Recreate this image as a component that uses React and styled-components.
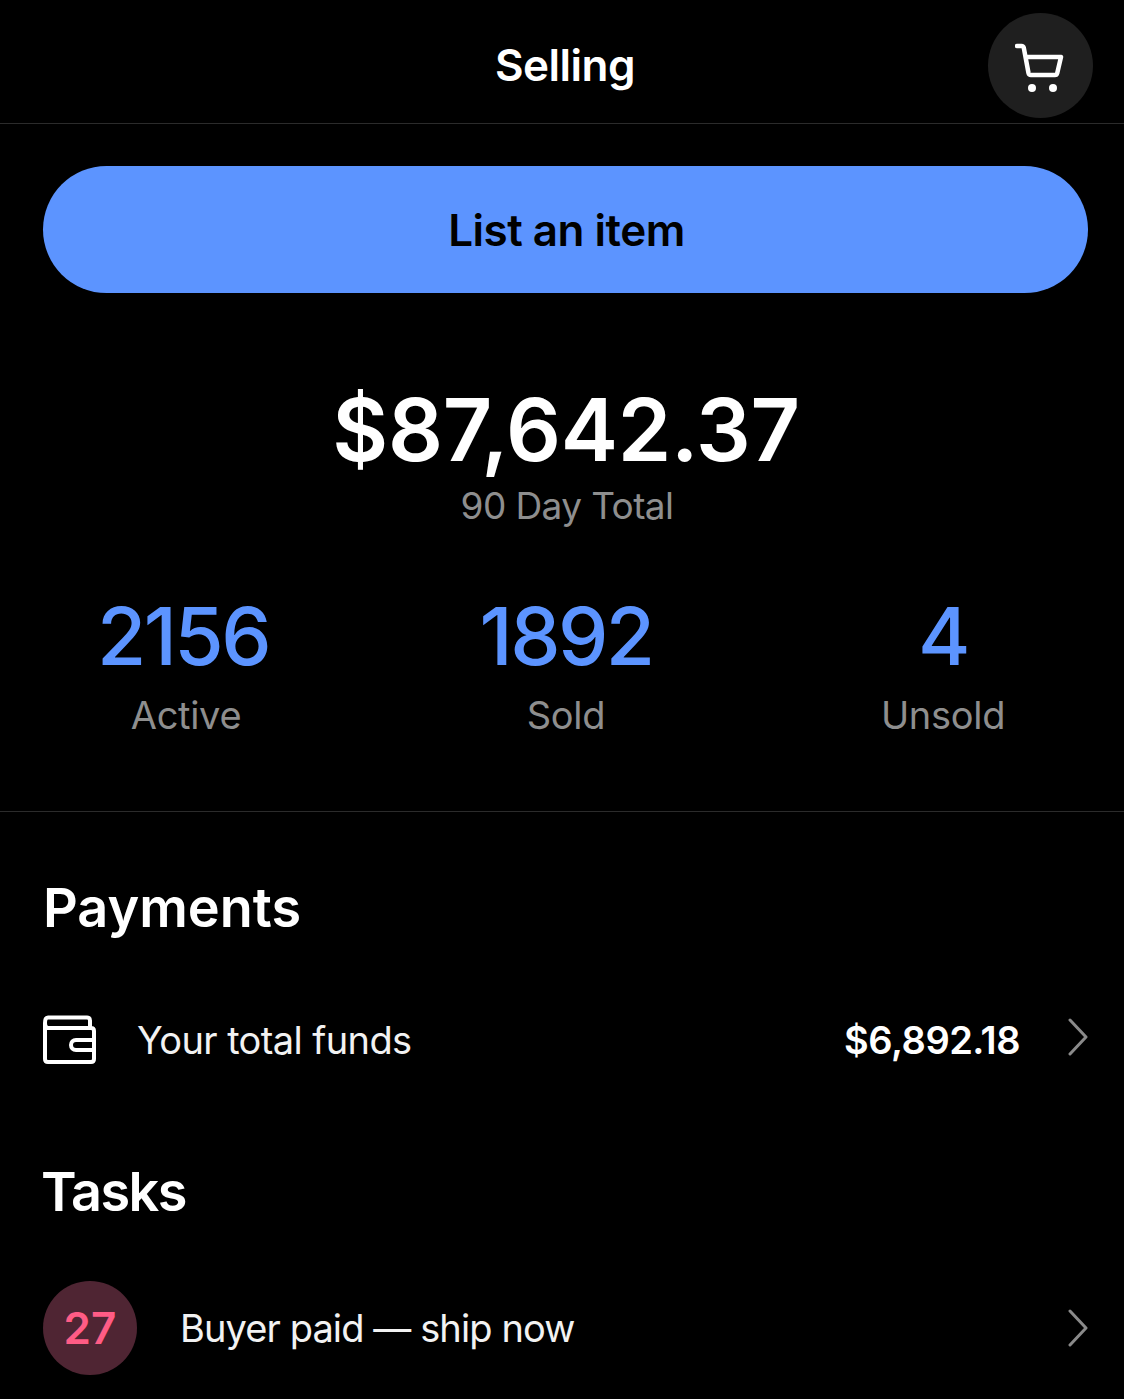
import React from 'react'
import styled, { createGlobalStyle } from 'styled-components'

const Global = createGlobalStyle`
  html, body {
    margin: 0;
    background: #000;
  }
  * { box-sizing: border-box; }
`

const Page = styled.div`
  width: 1124px;
  height: 1399px;
  overflow: hidden;
  background: #000;
  color: #fff;
  font-family: Inter, "Liberation Sans", sans-serif;
`

const Header = styled.header`
  position: relative;
  height: 124px;
  display: flex;
  align-items: center;
  justify-content: center;
  border-bottom: 1px solid #2b2b2b;
`

const HeaderTitle = styled.h1`
  margin: 6px 0 0 6px;
  font-size: 44px;
  font-weight: 600;
  letter-spacing: -0.5px;
`

const CartButton = styled.div`
  position: absolute;
  right: 31px;
  top: 13px;
  width: 105px;
  height: 105px;
  border-radius: 50%;
  background: #1f1f1f;
  display: flex;
  align-items: center;
  justify-content: center;
  padding-top: 3px;
`

const ListButton = styled.div`
  margin: 42px 36px 0 43px;
  height: 127px;
  border-radius: 64px;
  background: #5c94ff;
  color: #000;
  display: flex;
  align-items: center;
  justify-content: center;
  font-size: 44px;
  font-weight: 600;
  letter-spacing: -0.5px;
  padding-left: 2px;
`

const Total = styled.div`
  margin-top: 85px;
  text-align: center;
`

const Amount = styled.div`
  font-size: 86px;
  line-height: 104px;
  font-weight: 600;
  letter-spacing: -0.3px;
  margin-left: 8px;
`

const AmountLabel = styled.div`
  font-size: 37px;
  line-height: 44px;
  color: #8e8e8e;
  margin: 2px 0 0 10px;
  letter-spacing: -0.6px;
`

const Stats = styled.div`
  margin-top: 63px;
  display: grid;
  grid-template-columns: 370px 392px 362px;
  padding-bottom: 71px;
  border-bottom: 1px solid #2b2b2b;
`

const Stat = styled.div`
  text-align: center;
`

const StatValue = styled.div`
  font-size: 80px;
  line-height: 90px;
  font-weight: 500;
  color: #5c94ff;
  letter-spacing: -2.6px;
  margin-right: ${({ $shift = 0 }) => $shift}px;
`

const StatLabel = styled.div`
  margin: 9px 0 0 ${({ $shift = 0 }) => $shift}px;
  font-size: 38px;
  line-height: 50px;
  color: #8e8e8e;
  letter-spacing: -0.3px;
`

const Section = styled.section`
  padding: 0 36px 0 43px;
`

const SectionTitle = styled.h2`
  margin: ${({ $top }) => $top}px 0 0 ${({ $left = 0 }) => $left}px;
  font-size: 54px;
  line-height: 62px;
  font-weight: 600;
  letter-spacing: ${({ $spacing }) => $spacing}px;
`

const Row = styled.div`
  display: flex;
  align-items: center;
  margin-top: ${({ $top }) => $top}px;
`

const RowLabel = styled.div`
  flex: 1;
  margin-left: ${({ $left }) => $left}px;
  font-size: 38px;
  letter-spacing: -0.6px;
  color: #f2f2f2;
`

const TaskLabel = styled(RowLabel)`
  letter-spacing: -0.9px;
`

const RowValue = styled.div`
  font-size: 38px;
  font-weight: 600;
  letter-spacing: -0.5px;
  margin-right: 48px;
`

const Badge = styled.div`
  width: 94px;
  height: 94px;
  border-radius: 50%;
  background: #4f2533;
  color: #ff5c85;
  display: flex;
  align-items: center;
  justify-content: center;
  font-size: 44px;
  font-weight: 600;
`

const ChevronSvg = styled.svg`
  margin-bottom: ${({ $lift }) => $lift}px;
`

const WalletSvg = styled.svg`
  margin-left: -1px;
`

const CartIcon = () => (
  <svg width="52" height="52" viewBox="0 0 52 52" fill="none" stroke="#fff" strokeWidth="4.5" strokeLinecap="round" strokeLinejoin="round">
    <path d="M2 5h4.500c1.200 0 2 .7 2.300 1.900L13.500 32c.3 1.300 1.100 2 2.400 2h24c1.200 0 2-.6 2.300-1.800L46 16H11" />
    <circle cx="17" cy="47" r="4" fill="#fff" stroke="none" />
    <circle cx="38" cy="47" r="4" fill="#fff" stroke="none" />
  </svg>
)

const WalletIcon = () => (
  <WalletSvg width="54" height="50" viewBox="0 0 54 50" fill="none" stroke="#fff" strokeWidth="4" strokeLinecap="round" strokeLinejoin="round">
    <path d="M3 8V44c0 1.800 1.200 3 3 3h43c1.800 0 3-1.200 3-3V16c0-1.800-1.200-3-3-3H6C4 13 3 11 3 8s1-5.500 3-5.500h39c1.800 0 3 1.200 3 3V13" />
    <path d="M52 25H34c-3 0-5 2-5 5s2 5 5 5h18" />
  </WalletSvg>
)

const Chevron = ({ lift }) => (
  <ChevronSvg $lift={lift} width="20" height="38" viewBox="0 0 20 38" fill="none" stroke="#8a8a8a" strokeWidth="3" strokeLinecap="round" strokeLinejoin="round">
    <path d="M2 2l16 17L2 36" />
  </ChevronSvg>
)

const App = () => {
  return (
    <Page>
      <Global />
      <Header>
        <HeaderTitle>Selling</HeaderTitle>
        <CartButton><CartIcon /></CartButton>
      </Header>
      <ListButton>List an item</ListButton>
      <Total>
        <Amount>$87,642.37</Amount>
        <AmountLabel>90 Day Total</AmountLabel>
      </Total>
      <Stats>
        <Stat><StatValue $shift={4}>2156</StatValue><StatLabel $shift={2}>Active</StatLabel></Stat>
        <Stat><StatValue>1892</StatValue><StatLabel>Sold</StatLabel></Stat>
        <Stat><StatValue>4</StatValue><StatLabel>Unsold</StatLabel></Stat>
      </Stats>
      <Section>
        <SectionTitle $top={65} $spacing={0}>Payments</SectionTitle>
        <Row $top={76}>
          <WalletIcon />
          <RowLabel $left={41}>Your total funds</RowLabel>
          <RowValue>$6,892.18</RowValue>
          <Chevron lift={6} />
        </Row>
        <SectionTitle $top={96} $spacing={-1.6} $left={-2}>Tasks</SectionTitle>
        <Row $top={58}>
          <Badge>27</Badge>
          <TaskLabel $left={43}>Buyer paid — ship now</TaskLabel>
          <Chevron lift={0} />
        </Row>
      </Section>
    </Page>
  )
}

export default App
